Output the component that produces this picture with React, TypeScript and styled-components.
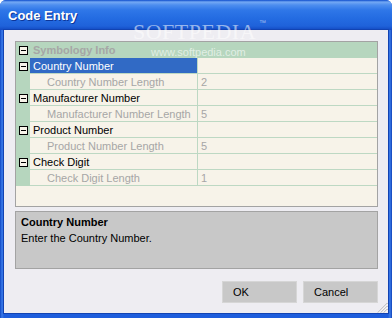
import styled, { createGlobalStyle } from "styled-components";

const GlobalStyle = createGlobalStyle`
  html, body {
    margin: 0;
    padding: 0;
    background: #ffffff;
  }
  body {
    font-family: "Liberation Sans", Tahoma, Arial, sans-serif;
    font-size: 11px;
  }
`;

const Window = styled.div`
  position: relative;
  width: 392px;
  height: 318px;
  box-sizing: border-box;
  display: flex;
  flex-direction: column;
  background: linear-gradient(90deg, #0f47c4 0px, #3a7ae8 2px, #1d5ddc 4px, #1d5ddc 388px, #3a7ae8 390px, #0f42b8 392px);
  border-radius: 6px 6px 0 0;
  overflow: hidden;
`;

const TitleBar = styled.div`
  height: 30px;
  flex: 0 0 30px;
  display: flex;
  align-items: center;
  padding-left: 8px;
  background: linear-gradient(
    180deg,
    #0d4ccc 0px,
    #74a9f4 2px,
    #4d8eef 5px,
    #2f77e8 10px,
    #246ce2 18px,
    #1f62da 26px,
    #1249c2 30px
  );
  color: #ffffff;
  font-weight: bold;
  font-size: 13px;
  text-shadow: 1px 1px 0 #0d3698;
`;

const Client = styled.div`
  position: relative;
  flex: 1;
  margin: 0 4px 5px 4px;
  background: #eeedf2;
  box-shadow: 0 0 0 1px #1243b2;
  padding: 11px 10px 0 11px;
  display: flex;
  flex-direction: column;
`;

const Grid = styled.div`
  height: 166px;
  box-sizing: border-box;
  border: 1px solid #a3a3a3;
  background: #f7f3e9;
  display: flex;
  flex-direction: column;
`;

const Row = styled.div<{ $category?: boolean }>`
  display: flex;
  height: 16px;
  background: ${(p) => (p.$category ? "#b6d6be" : "transparent")};
`;

const Margin = styled.div`
  flex: 0 0 14px;
  background: #b6d6be;
  display: flex;
  align-items: center;
  padding-left: 3px;
  box-sizing: border-box;
`;

const Expander = styled.div`
  width: 9px;
  height: 9px;
  box-sizing: border-box;
  border: 1px solid #000000;
  background: #f7f3e9;
  display: flex;
  align-items: center;
  justify-content: center;
  &::after {
    content: "";
    width: 5px;
    height: 1px;
    background: #000000;
  }
`;

const Label = styled.div<{ $selected?: boolean; $child?: boolean; $category?: boolean }>`
  flex: 0 0 167px;
  box-sizing: border-box;
  display: flex;
  align-items: center;
  padding-left: ${(p) => (p.$child ? "17px" : "3px")};
  border-bottom: 1px solid ${(p) => (p.$category ? "transparent" : "#bdd8c3")};
  background: ${(p) => (p.$selected ? "#316ac5" : "transparent")};
  color: ${(p) => (p.$selected ? "#ffffff" : p.$child || p.$category ? "#a6a6a6" : "#000000")};
  font-weight: ${(p) => (p.$category ? "bold" : "normal")};
  white-space: nowrap;
  overflow: hidden;
`;

const Split = styled.div<{ $category?: boolean }>`
  flex: 0 0 1px;
  background: ${(p) => (p.$category ? "transparent" : "#bdd8c3")};
`;

const Value = styled.div<{ $category?: boolean }>`
  flex: 1;
  box-sizing: border-box;
  display: flex;
  align-items: center;
  padding-left: 3px;
  color: #a6a6a6;
  border-bottom: 1px solid ${(p) => (p.$category ? "transparent" : "#bdd8c3")};
`;

const HelpPanel = styled.div`
  margin-top: 4px;
  height: 58px;
  box-sizing: border-box;
  border: 1px solid #a3a3a3;
  background: #c8c8c8;
  padding: 2px 5px;
  display: flex;
  flex-direction: column;
`;

const HelpTitle = styled.div`
  font-weight: bold;
  line-height: 16px;
`;

const HelpText = styled.div`
  line-height: 16px;
`;

const ButtonBar = styled.div`
  margin-top: 12px;
  display: flex;
  justify-content: flex-end;
  gap: 6px;
`;

const Button = styled.button`
  width: 75px;
  height: 22px;
  box-sizing: border-box;
  border: 1px solid #d6d6d6;
  background: #c8c8c8;
  font-family: inherit;
  font-size: 11px;
  color: #000000;
  text-align: left;
  padding: 0 0 0 10px;
`;

const Grip = styled.svg`
  position: absolute;
  right: 0;
  bottom: 0;
`;

const Watermark = styled.div`
  position: absolute;
  left: 133px;
  top: 19px;
  font-family: "Liberation Serif", serif;
  font-size: 22px;
  letter-spacing: 0.5px;
  color: rgba(255, 255, 255, 0.55);
  pointer-events: none;
  & > sup {
    font-family: "Liberation Sans", sans-serif;
    font-size: 7px;
    vertical-align: top;
    margin-left: 3px;
  }
`;

const WatermarkUrl = styled.div`
  position: absolute;
  left: 151px;
  top: 46px;
  font-size: 11px;
  color: rgba(255, 255, 255, 0.6);
  pointer-events: none;
`;

type Prop = { name: string; child?: boolean; value?: string; selected?: boolean };

const props: Prop[] = [
  { name: "Country Number", selected: true },
  { name: "Country Number Length", child: true, value: "2" },
  { name: "Manufacturer Number" },
  { name: "Manufacturer Number Length", child: true, value: "5" },
  { name: "Product Number" },
  { name: "Product Number Length", child: true, value: "5" },
  { name: "Check Digit" },
  { name: "Check Digit Length", child: true, value: "1" },
];

const App = () => {
  return (
    <>
      <GlobalStyle />
      <Window>
        <TitleBar>Code Entry</TitleBar>
        <Client>
          <Grid>
            <Row $category>
              <Margin>
                <Expander />
              </Margin>
              <Label $category>Symbology Info</Label>
              <Split $category />
              <Value $category />
            </Row>
            {props.map((p) => (
              <Row key={p.name}>
                <Margin>{!p.child && <Expander />}</Margin>
                <Label $child={p.child} $selected={p.selected}>
                  {p.name}
                </Label>
                <Split />
                <Value>{p.value}</Value>
              </Row>
            ))}
          </Grid>
          <HelpPanel>
            <HelpTitle>Country Number</HelpTitle>
            <HelpText>Enter the Country Number.</HelpText>
          </HelpPanel>
          <ButtonBar>
            <Button>OK</Button>
            <Button>Cancel</Button>
          </ButtonBar>
          <Grip width="11" height="11" viewBox="0 0 11 11">
            <g stroke="#a0a0a0" strokeWidth="1">
              <line x1="10.5" y1="1" x2="1" y2="10.5" />
              <line x1="10.5" y1="4" x2="4" y2="10.5" />
              <line x1="10.5" y1="7" x2="7" y2="10.5" />
            </g>
            <g stroke="#ffffff" strokeWidth="1">
              <line x1="10.5" y1="2" x2="2" y2="10.5" />
              <line x1="10.5" y1="5" x2="5" y2="10.5" />
              <line x1="10.5" y1="8" x2="8" y2="10.5" />
            </g>
          </Grip>
        </Client>
        <Watermark>
          SOFTPEDIA<sup>™</sup>
        </Watermark>
        <WatermarkUrl>www.softpedia.com</WatermarkUrl>
      </Window>
    </>
  );
};

export default App;
